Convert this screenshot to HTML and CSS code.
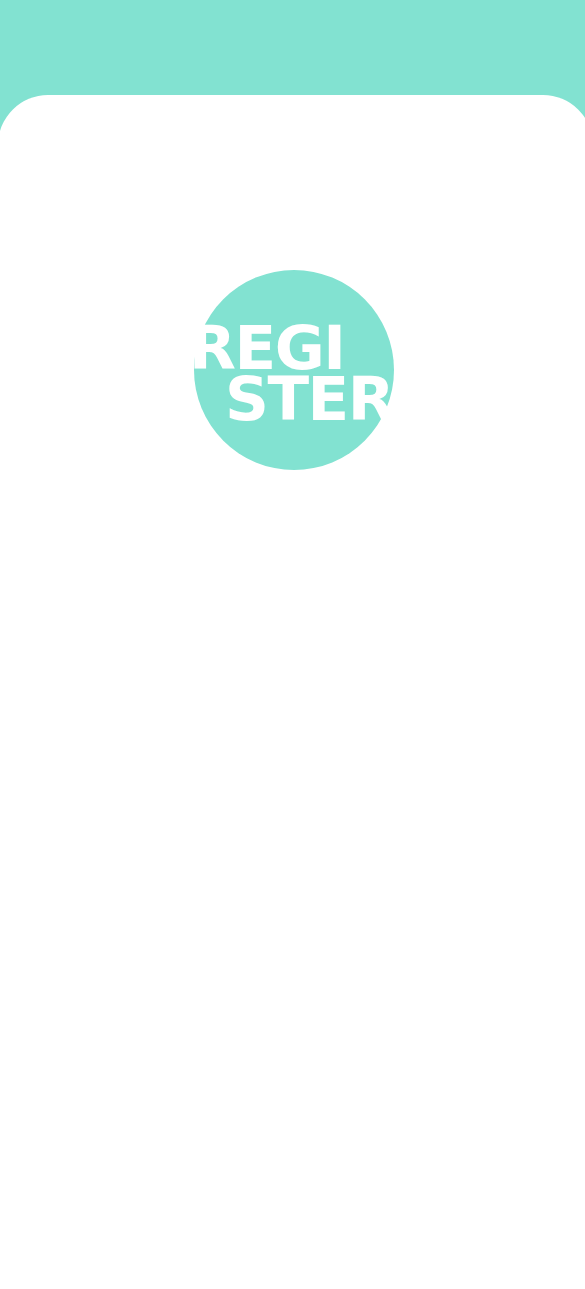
FILE: index.html
```html
<!DOCTYPE html>
<html lang="en">
<head>
<meta charset="utf-8">
<title>Register</title>
<link rel="stylesheet" href="styles.css">
</head>
<body>
  <div class="page">
    <main class="card">
      <div class="badge">
        <h1 class="badge-title">
          <span class="line line-1">REGI</span>
          <span class="line line-2">STER</span>
        </h1>
      </div>
    </main>
  </div>
</body>
</html>
```

FILE: styles.css
```css
html, body {
  margin: 0;
  padding: 0;
}

body {
  background: #82e2d1;
  overflow: hidden;
  font-family: "DejaVu Sans", "Open Sans", sans-serif;
}

.page {
  padding-top: 95px;
  min-height: 100vh;
  box-sizing: border-box;
  display: flex;
  flex-direction: column;
}

.card {
  flex: 1;
  background: #ffffff;
  border-radius: 50px 50px 0 0;
  margin: 0 -8px 0 -2px;
  display: flex;
  flex-direction: column;
  align-items: flex-start;
  padding-top: 175px;
  padding-left: 196px;
}

.badge {
  width: 200px;
  height: 200px;
  border-radius: 50%;
  background: #82e2d1;
  box-sizing: border-box;
  padding-top: 52px;
}

.badge-title {
  margin: 0 0 0 -5px;
  color: #ffffff;
  font-size: 61px;
  font-weight: 700;
  line-height: 51px;
  letter-spacing: -1.5px;
}

.line {
  display: block;
  white-space: nowrap;
}

.line-2 {
  margin-left: 36px;
}
```
